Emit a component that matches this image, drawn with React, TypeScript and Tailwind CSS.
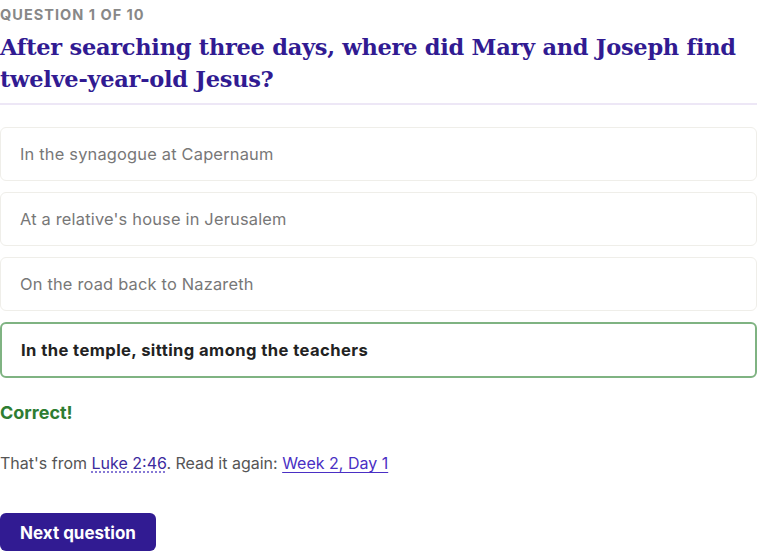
export default function App() {
  const options = [
    "In the synagogue at Capernaum",
    "At a relative's house in Jerusalem",
    "On the road back to Nazareth",
  ]

  return (
    <div className="w-[757px] h-[551px] overflow-hidden bg-white font-['Inter','Liberation_Sans',sans-serif]">
      <div className="text-[14.5px] font-bold uppercase tracking-[0.07em] text-[#888888] pt-[5px] leading-[20px]">
        Question 1 of 10
      </div>

      <h1 className="mt-[6px] text-[22.5px] leading-[32px] font-bold text-[#311b92] font-['DejaVu_Serif','Liberation_Serif',serif] tracking-[-0.012em] pb-[8px] border-b-2 border-[#ede7f6]">
        After searching three days, where did Mary and Joseph find twelve-year-old Jesus?
      </h1>

      <div className="mt-[22px] flex flex-col gap-[11px]">
        {options.map((o) => (
          <div
            key={o}
            className="h-[54px] flex items-center px-[19px] rounded-[6px] border border-[#efeee9] text-[16.4px] tracking-[0.012em] text-[#777777]"
          >
            {o}
          </div>
        ))}
        <div className="h-[56px] flex items-center px-[19px] rounded-[6px] border-2 border-[#7fb382] text-[16.6px] tracking-[0.025em] font-bold text-[#222222]">
          In the temple, sitting among the teachers
        </div>
      </div>

      <div className="mt-[23px] text-[18px] font-bold text-[#2e7d32] leading-[24px]">
        Correct!
      </div>

      <p className="mt-[26px] text-[16px] text-[#555555] leading-[24px]">
        That's from{" "}
        <span className="text-[#3b2a9e] underline decoration-dotted decoration-[#6a5acd] underline-offset-[3px]">
          Luke 2:46
        </span>
        . Read it again:{" "}
        <a href="#" className="text-[#4a2fc4] underline underline-offset-[3px]">
          Week 2, Day 1
        </a>
      </p>

      <button className="mt-[38px] w-[156px] h-[38px] pt-[3px] rounded-[6px] bg-[#311b92] text-white text-[17px] font-bold">
        Next question
      </button>
    </div>
  )
}
